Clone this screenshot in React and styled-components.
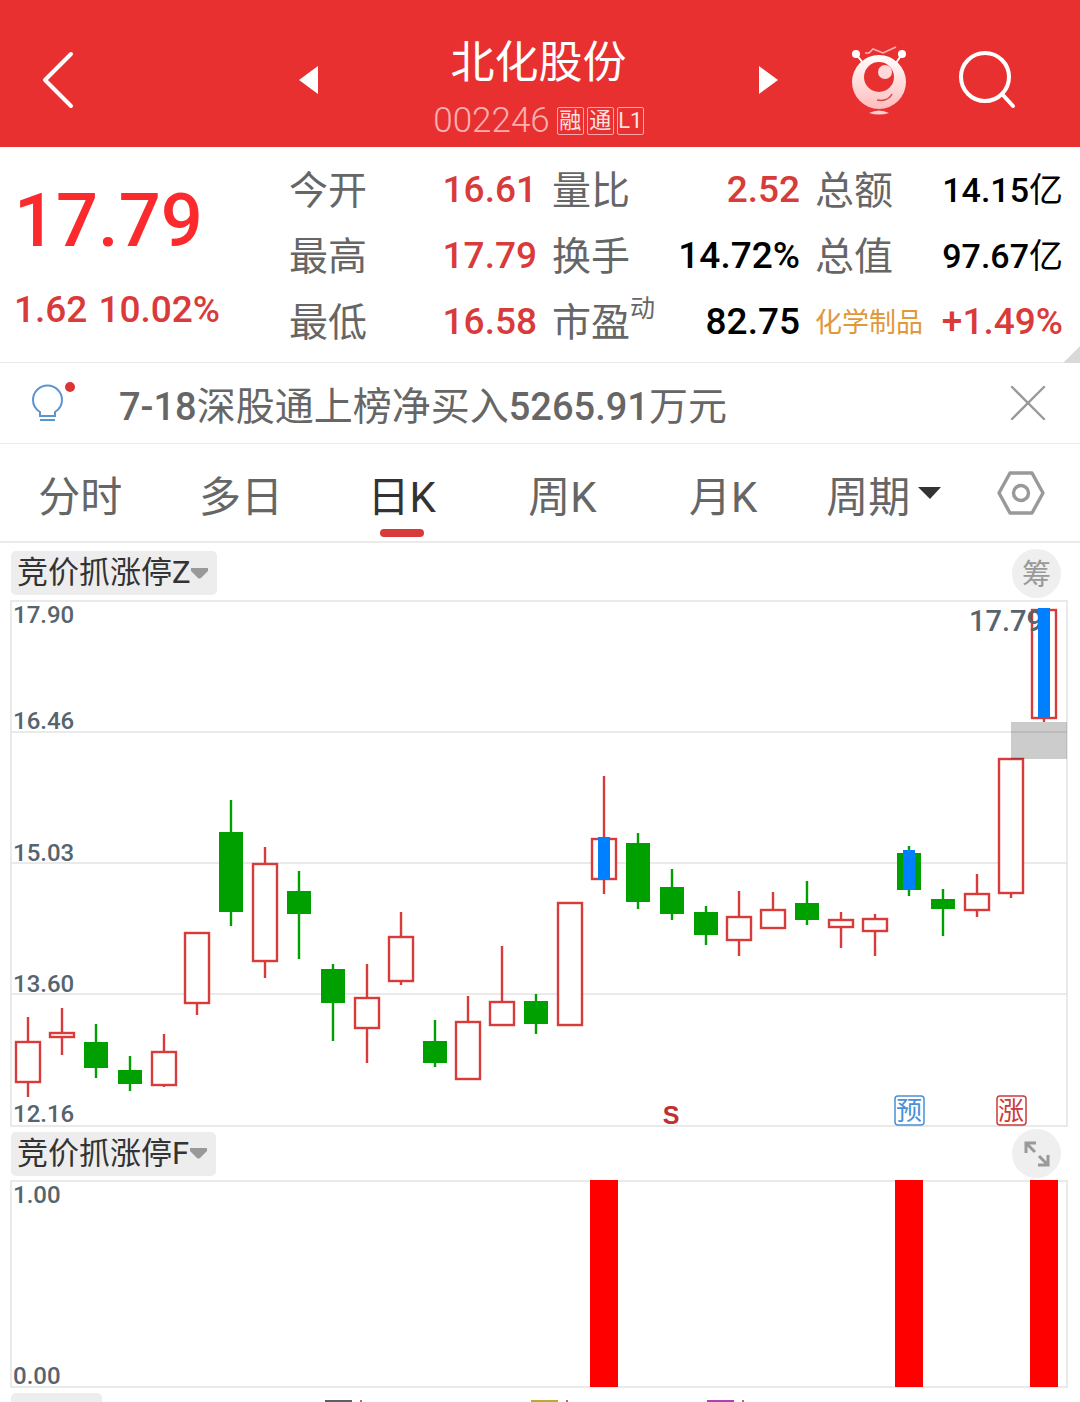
import * as React from 'react';
import styled, {createGlobalStyle} from 'styled-components';

const colors = {
  brand: '#e83030',
  price: '#fb2a2c',
  up: '#d93a3a',
  down: '#00a000',
  signal: '#0080ff',
  bar: '#ff0000',
  black: '#000000',
  text: '#333333',
  gray: '#666666',
  lightGray: '#999999',
  axis: '#56646e',
  line: '#ebebeb',
  chip: '#ededed',
  sector: '#e0983a'
};

const GlobalStyle = createGlobalStyle`
  * {
    box-sizing: border-box;
  }

  body {
    margin: 0;
    background-color: #fff;
    font-family: Roboto, "Noto Sans CJK SC", sans-serif;
    color: ${colors.gray};
  }

  button, select {
    margin: 0;
    padding: 0;
    border: 0;
    background: none;
    color: inherit;
    font: inherit;
    cursor: pointer;
  }

  svg {
    display: block;
    flex-shrink: 0;
  }
`;

const Header = styled.header`
  display: grid;
  grid-template-columns: 5fr 8fr 5fr;
  align-items: center;
  height: 147px;
  padding: 12px 3px 0 0;
  background-color: ${colors.brand};
  color: #fff;
`;

const HeaderSide = styled.div`
  display: flex;
  align-items: center;
  gap: 50px;
  justify-content: ${props => props.$end ? 'flex-end' : 'flex-start'};
  padding: ${props => props.$end ? '0 60px 0 0' : '0 0 0 40px'};
`;

const Switcher = styled.div`
  display: flex;
  align-items: center;
  justify-content: space-between;
`;

const Heading = styled.div`
  display: flex;
  flex-direction: column;
  align-items: center;
  padding-top: 18px;
`;

const Name = styled.h1`
  margin: 0;
  font-size: 44px;
  line-height: 64px;
  font-weight: 400;
`;

const CodeRow = styled.div`
  display: flex;
  align-items: center;
  gap: 3px;
  height: 52px;
`;

const Code = styled.span`
  margin-right: 4px;
  font-size: 35px;
  line-height: 52px;
  font-weight: 300;
  color: #fbb0b0;
`;

const Badge = styled.span`
  display: flex;
  align-items: center;
  justify-content: center;
  width: 27px;
  height: 28px;
  border: 1px solid #f9a9a9;
  border-radius: 2px;
  font-size: 22px;
  line-height: 26px;
  color: #fde0e0;
`;

const Quote = styled.section`
  position: relative;
  display: grid;
  grid-template-columns: 275px 1fr;
  padding: 10px 17px 7px 14px;
  border-bottom: 1px solid ${colors.line};
`;

const Price = styled.div`
  font-size: 74px;
  line-height: 128px;
  font-weight: 500;
  color: ${colors.price};
`;

const Change = styled.div`
  display: flex;
  gap: 11px;
  font-size: 37px;
  line-height: 50px;
  font-weight: 500;
  color: ${colors.up};
`;

const Stats = styled.dl`
  display: grid;
  grid-template-columns: repeat(3, 1fr);
  column-gap: 15px;
  margin: 0;
`;

const Stat = styled.div`
  display: flex;
  align-items: center;
  justify-content: space-between;
  height: 66px;
  white-space: nowrap;
`;

const StatLabel = styled.dt`
  display: flex;
  padding-top: 2px;
  font-size: ${props => props.$sector ? 27 : 39}px;
  line-height: 66px;
  color: ${props => props.$sector ? colors.sector : colors.gray};
`;

const Sup = styled.sup`
  font-size: 25px;
  line-height: 38px;
`;

const StatValue = styled.dd`
  margin: 0;
  font-size: ${props => props.$small ? 34 : 37}px;
  line-height: 66px;
  font-weight: 500;
  color: ${props => props.$up ? colors.up : colors.black};
`;

const Unit = styled.span`
  font-weight: 400;
`;

const Corner = styled.span`
  position: absolute;
  right: 0;
  bottom: -1px;
  border-left: 17px solid transparent;
  border-bottom: 17px solid #d9d9d9;
`;

const Notice = styled.section`
  display: flex;
  align-items: center;
  height: 81px;
  padding: 0 34px 0 30px;
  border-bottom: 1px solid ${colors.line};
`;

const NoticeText = styled.p`
  flex: 1;
  margin: 0 0 0 41px;
  padding-top: 8px;
  font-size: 39px;
  line-height: 72px;
`;

const Digits = styled.span`
  font-size: 38px;
  font-weight: 500;
`;

const Tabs = styled.nav`
  display: grid;
  grid-template-columns: repeat(6, 161fr) 114fr;
  height: 99px;
  padding-right: 2px;
  border-bottom: 2px solid ${colors.line};
`;

const Tab = styled.button`
  display: flex;
  flex-direction: column;
  align-items: center;
  justify-content: flex-end;
  padding-bottom: 4px;
  font-size: 42px;
  line-height: 62px;
  color: ${props => props.$active ? colors.text : colors.gray};

  &::after {
    content: '';
    width: 44px;
    height: 8px;
    border-radius: 4px;
    background-color: ${props => props.$active ? colors.up : 'transparent'};
  }
`;

const PeriodTab = styled.label`
  display: flex;
  align-items: center;
  justify-content: center;
  gap: 7px;
`;

const PeriodSelect = styled.select`
  appearance: none;
  margin-top: 10px;
  font-size: 42px;
  line-height: 62px;
`;

const IconButton = styled.button`
  display: flex;
  align-items: center;
  justify-content: center;
`;

const PanelHead = styled.div`
  display: flex;
  align-items: center;
  justify-content: space-between;
  height: ${props => props.$tall ? 57 : 53}px;
  padding: ${props => props.$tall ? '3px 19px 0 11px' : '0 19px 0 11px'};
`;

const Picker = styled.label`
  display: flex;
  align-items: center;
  height: 44px;
  padding: 0 9px 0 6px;
  border-radius: 5px;
  background-color: ${colors.chip};
  color: ${colors.text};
`;

const PickerSelect = styled.select`
  appearance: none;
  font-size: 31px;
  line-height: 44px;
`;

const RoundButton = styled.button`
  display: flex;
  align-items: center;
  justify-content: center;
  width: 49px;
  height: 49px;
  border-radius: 50%;
  background-color: #efefef;
  font-size: 29px;
  line-height: 49px;
  color: ${colors.lightGray};
`;

const RoundLabel = styled.span`
  padding-top: 4px;
`;

const Plot = styled.svg`
  width: 100%;
  height: auto;
`;

const NextPanel = styled.div`
  display: flex;
  height: 15px;
  padding: 5px 11px 0;
  overflow: hidden;
`;

const NextPicker = styled.div`
  width: 91px;
  height: 44px;
  border-radius: 5px;
  background-color: ${colors.chip};
`;

const Legend = styled.div`
  display: grid;
  grid-template-columns: 206px 176px 38px;
  margin: 7px 0 0 223px;
`;

const LegendMark = styled.span`
  width: 27px;
  height: 3px;
  background-color: ${props => props.$color};
`;

const LegendTick = styled.span`
  width: 2px;
  height: 3px;
  margin-left: 8px;
  background-color: #d06060;
`;

const LegendItem = styled.div`
  display: flex;
`;

const stats = [
  {label: '今开', value: '16.61', up: true},
  {label: '量比', value: '2.52', up: true},
  {label: '总额', value: '14.15', unit: '亿'},
  {label: '最高', value: '17.79', up: true},
  {label: '换手', value: '14.72%'},
  {label: '总值', value: '97.67', unit: '亿'},
  {label: '最低', value: '16.58', up: true},
  {label: '市盈', sup: '动', value: '82.75'},
  {label: '化学制品', value: '+1.49%', up: true, sector: true}
];

const tabs = ['分时', '多日', '日K', '周K', '月K'];

const legend = ['#5a6068', '#b5ad35', '#b040b8'];

// [rising, high, body top, body bottom, low], measured down from the plot's top
const candles = [
  [1, 417, 442, 482, 497],
  [1, 408, 433, 437, 455],
  [0, 424, 442, 468, 478],
  [0, 456, 470, 484, 491],
  [1, 434, 452, 485, 487],
  [1, 333, 333, 403, 415],
  [0, 200, 232, 312, 326],
  [1, 247, 264, 361, 378],
  [0, 271, 291, 314, 359],
  [0, 364, 369, 403, 441],
  [1, 364, 398, 428, 463],
  [1, 312, 337, 381, 385],
  [0, 420, 441, 463, 467],
  [1, 396, 422, 479, 479],
  [1, 346, 402, 425, 425],
  [0, 394, 401, 424, 434],
  [1, 303, 303, 425, 425],
  [1, 176, 239, 279, 294],
  [0, 233, 243, 302, 309],
  [0, 269, 287, 314, 320],
  [0, 306, 312, 335, 345],
  [1, 291, 317, 340, 356],
  [1, 292, 310, 328, 328],
  [0, 281, 303, 320, 325],
  [1, 312, 320, 327, 348],
  [1, 314, 319, 331, 356],
  [0, 246, 253, 290, 296],
  [0, 289, 299, 309, 336],
  [1, 274, 294, 310, 317],
  [1, 159, 159, 293, 298],
  [1, 10, 10, 118, 122]
];

const signals = [
  {index: 17, top: 237, bottom: 279},
  {index: 26, top: 250, bottom: 290},
  {index: 30, top: 8, bottom: 118}
];

const candleX = index => Math.round(28 + index * 33.88);

const Candle = ({index, data}) => {
  const [rising, high, top, bottom, low] = data;
  const x = candleX(index);
  const color = rising ? colors.up : colors.down;

  return (
    <g stroke={color} strokeWidth="2.4">
      <path d={`M${x} ${high}V${top}M${x} ${bottom}V${low}`}/>
      <rect
        x={x - 12}
        y={top}
        width="24"
        height={bottom - top}
        fill={rising ? '#fff' : color}
        strokeWidth={rising ? 2.4 : 0}
      />
    </g>
  );
};

const AxisText = ({y, children}) => (
  <text x="13" y={y} fontSize="24" fontWeight="500" fill={colors.axis}>{children}</text>
);

const Marker = ({x, color, children}) => (
  <g>
    <rect x={x - 14} y="496" width="29" height="29" rx="3" fill="#fff" stroke={color} strokeWidth="1.5"/>
    <text x={x} y="520" fontSize="26" textAnchor="middle" fill={color}>{children}</text>
  </g>
);

const CandleChart = () => (
  <Plot viewBox="0 0 1080 527" role="img" aria-label="日K">
    <path d="M11 1H1067V526H11ZM11 132H1067M11 263H1067M11 394H1067" fill="none" stroke="#e4e4e4" strokeWidth="1.5"/>
    {candles.map((data, index) => <Candle key={index} index={index} data={data}/>)}
    <rect x="1011" y="122" width="56" height="37" fill="#000" fillOpacity=".2"/>
    <AxisText y="23">17.90</AxisText>
    <AxisText y="129">16.46</AxisText>
    <AxisText y="261">15.03</AxisText>
    <AxisText y="392">13.60</AxisText>
    <AxisText y="522">12.16</AxisText>
    <text x="969" y="31" fontSize="29" fontWeight="500" fill={colors.axis}>17.79</text>
    {signals.map(({index, top, bottom}) => (
      <rect key={index} x={candleX(index) - 6} y={top} width="12" height={bottom - top} fill={colors.signal}/>
    ))}
    <text x="671" y="524" fontFamily="Liberation Sans, sans-serif" fontSize="25" fontWeight="700" textAnchor="middle" fill="#c22f2f">S</text>
    <Marker x={909} color="#4a90d9">预</Marker>
    <Marker x={1011} color="#cc3a3a">涨</Marker>
  </Plot>
);

const SignalChart = () => (
  <Plot viewBox="0 0 1080 208" role="img" aria-label="竞价抓涨停F">
    <path d="M11 1H1067V207H11Z" fill="none" stroke="#e4e4e4" strokeWidth="1.5"/>
    <AxisText y="23">1.00</AxisText>
    <AxisText y="204">0.00</AxisText>
    {signals.map(({index}) => (
      <rect key={index} x={candleX(index) - 14} y="0" width="28" height="207" fill={colors.bar}/>
    ))}
  </Plot>
);

const RobotIcon = () => (
  <svg width="56" height="70" viewBox="0 0 56 70" fill="none">
    <defs>
      <linearGradient id="robot" x1="0" y1="0" x2="0" y2="1">
        <stop offset="0" stopColor="#fff"/>
        <stop offset="1" stopColor="#ffbcbc"/>
      </linearGradient>
    </defs>
    <path d="M5 9L12 18M51 9L45 18" stroke="#fff" strokeWidth="2"/>
    <circle cx="5" cy="9" r="4" fill="#fff"/>
    <circle cx="51" cy="9" r="4" fill="#fff"/>
    <path d="M14 8H18L22 4L32 8L45 2" stroke="#ffb5b5" strokeWidth="1.5"/>
    <circle cx="28" cy="37" r="27" fill="url(#robot)"/>
    <circle cx="28" cy="32" r="15" fill={colors.brand}/>
    <circle cx="34" cy="27" r="7" fill="#ffd9d9"/>
    <path d="M26 55Q37 57 41 49" stroke="#c94a4a" strokeWidth="1.5"/>
    <path d="M18 68Q28 63 38 68Q28 71 18 68Z" fill="#ffd0d0"/>
  </svg>
);

const BulbIcon = () => (
  <svg width="48" height="42" viewBox="0 0 48 42" fill="none" stroke="#5b95d0" strokeWidth="2">
    <path d="M10 34V30C5 27 3 22 3 18A14.5 14.5 0 0 1 32 18C32 22 30 27 25 30V34ZM10 38H25"/>
    <circle cx="40" cy="5" r="5" fill="#dd3333" stroke="none"/>
  </svg>
);

const CaretIcon = () => (
  <svg width="17" height="11" viewBox="0 0 17 11">
    <path d="M0 0H17V3L10 10Q8 11 7 10L0 3Z" fill="#999"/>
  </svg>
);

const App = () => {
  const [active, setActive] = React.useState('日K');

  return (
    <>
      <GlobalStyle/>
      <Header>
        <HeaderSide>
          <IconButton aria-label="返回">
            <svg width="36" height="60" viewBox="0 0 36 60" fill="none" stroke="#fff" strokeWidth="4" strokeLinecap="round" strokeLinejoin="round">
              <path d="M31 4L5 30L31 56"/>
            </svg>
          </IconButton>
        </HeaderSide>
        <Switcher>
          <IconButton aria-label="上一只">
            <svg width="19" height="28" viewBox="0 0 19 28"><path d="M0 14L19 0V28Z" fill="#fff"/></svg>
          </IconButton>
          <Heading>
            <Name>北化股份</Name>
            <CodeRow>
              <Code>002246</Code>
              <Badge>融</Badge>
              <Badge>通</Badge>
              <Badge>L1</Badge>
            </CodeRow>
          </Heading>
          <IconButton aria-label="下一只">
            <svg width="19" height="28" viewBox="0 0 19 28"><path d="M19 14L0 0V28Z" fill="#fff"/></svg>
          </IconButton>
        </Switcher>
        <HeaderSide $end>
          <IconButton aria-label="助手"><RobotIcon/></IconButton>
          <IconButton aria-label="搜索">
            <svg width="60" height="60" viewBox="0 0 60 60" fill="none" stroke="#fff" strokeWidth="4" strokeLinecap="round">
              <circle cx="28" cy="27" r="24"/>
              <path d="M45 44L56 56"/>
            </svg>
          </IconButton>
        </HeaderSide>
      </Header>
      <Quote>
        <div>
          <Price>17.79</Price>
          <Change>
            <span>1.62</span>
            <span>10.02%</span>
          </Change>
        </div>
        <Stats>
          {stats.map(stat => (
            <Stat key={stat.label}>
              <StatLabel $sector={stat.sector}>
                {stat.label}
                {stat.sup && <Sup>{stat.sup}</Sup>}
              </StatLabel>
              <StatValue $up={stat.up} $small={stat.unit}>
                {stat.value}
                {stat.unit && <Unit>{stat.unit}</Unit>}
              </StatValue>
            </Stat>
          ))}
        </Stats>
        <Corner/>
      </Quote>
      <Notice>
        <BulbIcon/>
        <NoticeText>
          <Digits>7-18</Digits>深股通上榜净买入<Digits>5265.91</Digits>万元
        </NoticeText>
        <IconButton aria-label="关闭">
          <svg width="36" height="36" viewBox="0 0 36 36" stroke="#999" strokeWidth="2.4" strokeLinecap="round">
            <path d="M2 2L34 34M34 2L2 34"/>
          </svg>
        </IconButton>
      </Notice>
      <Tabs>
        {tabs.map(tab => (
          <Tab key={tab} $active={tab === active} onClick={() => setActive(tab)}>{tab}</Tab>
        ))}
        <PeriodTab>
          <PeriodSelect aria-label="周期">
            <option>周期</option>
          </PeriodSelect>
          <svg width="23" height="12" viewBox="0 0 23 12"><path d="M0 0H23L12 12Z" fill="#333"/></svg>
        </PeriodTab>
        <IconButton aria-label="设置">
          <svg width="48" height="46" viewBox="0 0 48 46" fill="none" stroke="#999" strokeWidth="3.4" strokeLinejoin="round">
            <path d="M13 3H35L46 23L35 43H13L2 23Z"/>
            <circle cx="24" cy="23" r="7.5"/>
          </svg>
        </IconButton>
      </Tabs>
      <PanelHead $tall>
        <Picker>
          <PickerSelect aria-label="主图指标">
            <option>竞价抓涨停Z</option>
          </PickerSelect>
          <CaretIcon/>
        </Picker>
        <RoundButton><RoundLabel>筹</RoundLabel></RoundButton>
      </PanelHead>
      <CandleChart/>
      <PanelHead>
        <Picker>
          <PickerSelect aria-label="副图指标">
            <option>竞价抓涨停F</option>
          </PickerSelect>
          <CaretIcon/>
        </Picker>
        <RoundButton aria-label="放大">
          <svg width="26" height="26" viewBox="0 0 26 26" fill="none" stroke="#999" strokeWidth="3">
            <path d="M2 12V2H12M2 2L11 11M14 24H24V14M24 24L15 15"/>
          </svg>
        </RoundButton>
      </PanelHead>
      <SignalChart/>
      <NextPanel>
        <NextPicker/>
        <Legend>
          {legend.map(color => (
            <LegendItem key={color}>
              <LegendMark $color={color}/>
              <LegendTick/>
            </LegendItem>
          ))}
        </Legend>
      </NextPanel>
    </>
  );
};

export default App;
